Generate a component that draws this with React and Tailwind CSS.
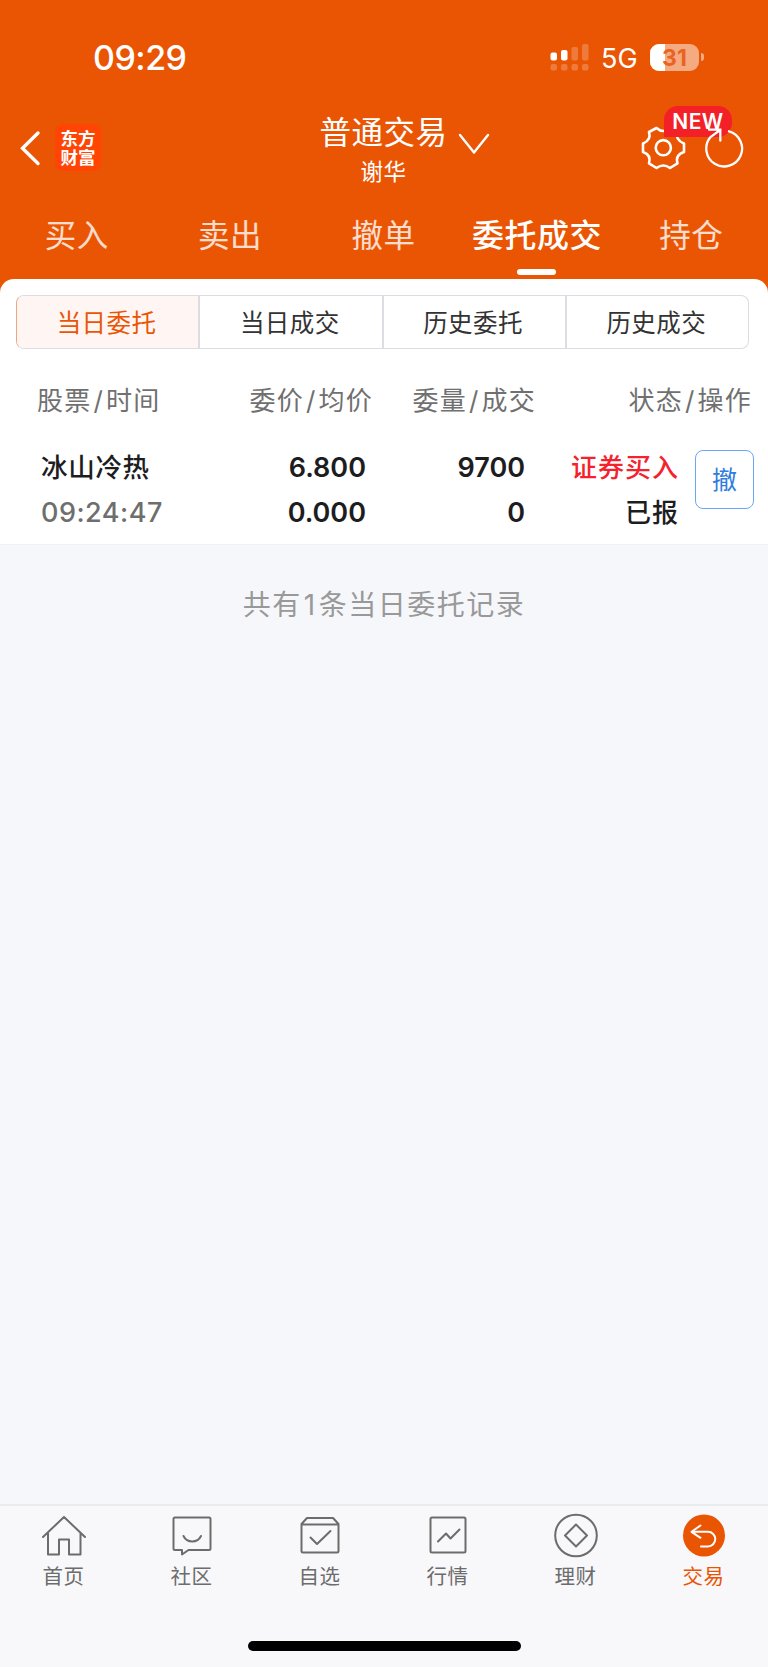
const tabs = ["买入", "卖出", "撤单", "委托成交", "持仓"];

const segments = ["当日委托", "当日成交", "历史委托", "历史成交"];

const orders = [
  {
    name: "冰山冷热",
    time: "09:24:47",
    price: "6.800",
    avgPrice: "0.000",
    amount: "9700",
    filled: "0",
    side: "证券买入",
    status: "已报",
  },
];

const HomeIcon = () => (
  <svg className="w-12 h-12" viewBox="0 0 48 48" fill="none" stroke="currentColor" strokeWidth="2" strokeLinejoin="round" strokeLinecap="round">
    <path d="M3 25 24 5l21 20M8 21.500V42.500H19V27.500h10v15h11.500v-21" />
  </svg>
);

const CommunityIcon = () => (
  <svg className="w-12 h-12" viewBox="0 0 48 48" fill="none" stroke="currentColor" strokeWidth="2" strokeLinejoin="round" strokeLinecap="round">
    <path d="M7 5.500h34a1.500 1.500 0 0 1 1.500 1.500v29.500a1.500 1.500 0 0 1-1.500 1.500H20.500L14 42.500V38H7a1.500 1.500 0 0 1-1.500-1.500V7A1.500 1.500 0 0 1 7 5.500Z" />
    <path d="M15.500 24c3.500 7.300 14 7.300 17.500 0" />
  </svg>
);

const WatchlistIcon = () => (
  <svg className="w-12 h-12" viewBox="0 0 48 48" fill="none" stroke="currentColor" strokeWidth="2" strokeLinejoin="round" strokeLinecap="round">
    <path d="M5.500 12 11 6h26l5.500 6V39a1.500 1.500 0 0 1-1.500 1.500H7A1.500 1.500 0 0 1 5.500 39V12ZM5.500 12.500h37" />
    <path d="m14.500 25.500 6.500 6.500 13.500-13" />
  </svg>
);

const MarketIcon = () => (
  <svg className="w-12 h-12" viewBox="0 0 48 48" fill="none" stroke="currentColor" strokeWidth="2" strokeLinejoin="round" strokeLinecap="round">
    <rect x="6.500" y="5.500" width="35" height="35" rx="1.500" />
    <path d="m14 29.500 8-8 4.500 5L35.500 17.500" />
  </svg>
);

const WealthIcon = () => (
  <svg className="w-12 h-12" viewBox="0 0 48 48" fill="none" stroke="currentColor" strokeWidth="2" strokeLinejoin="round">
    <circle cx="24" cy="23.500" r="20.800" />
    <path d="M24 12.500 35 23.500 24 34.500 13 23.500Z" />
  </svg>
);

const TradeIcon = () => (
  <svg className="w-12 h-12" viewBox="0 0 48 48" fill="none">
    <circle cx="24" cy="23.500" r="21" fill="#ea5504" />
    <path d="M20.500 13.500 11.500 19.800l9 6M12 19.800h16a7.300 7.300 0 0 1 0 14.600h-7" stroke="#fff" strokeWidth="2" strokeLinejoin="round" strokeLinecap="round" />
  </svg>
);

const navItems = [
  { label: "首页", icon: HomeIcon },
  { label: "社区", icon: CommunityIcon },
  { label: "自选", icon: WatchlistIcon },
  { label: "行情", icon: MarketIcon },
  { label: "理财", icon: WealthIcon },
  { label: "交易", icon: TradeIcon, active: true },
];

const StatusBar = () => (
  <div className="h-[110px] pt-[37px] pl-[93px] pr-[64px] flex items-start justify-between">
    <span className="text-[34px] leading-[41px] font-medium tracking-[-0.5px]">09:29</span>
    <div className="h-10 flex items-center">
      {/* Dual SIM signal */}
      <svg className="w-[39px] h-7" viewBox="0 0 39 28" fill="#fff">
        <rect x="0.500" y="9.500" width="6.500" height="8" rx="2" />
        <rect x="11" y="7" width="6.500" height="10.500" rx="2" />
        <g fillOpacity="0.220">
          <rect x="21.500" y="4" width="6.500" height="13.500" rx="2" />
          <rect x="32" y="1" width="6.500" height="16.500" rx="2" />
          <rect x="0.500" y="21" width="6.500" height="6.500" rx="2" />
          <rect x="11" y="21" width="6.500" height="6.500" rx="2" />
          <rect x="21.500" y="21" width="6.500" height="6.500" rx="2" />
          <rect x="32" y="21" width="6.500" height="6.500" rx="2" />
        </g>
      </svg>
      <span className="ml-3 pt-[3px] w-[37px] text-[27px] leading-9 whitespace-nowrap">5G</span>
      <div className="ml-3 relative w-[49px] h-[27px] rounded-[9px] overflow-hidden bg-white/50">
        <div className="w-[15px] h-full bg-white" />
        <span className="absolute inset-0 text-center text-[23px] leading-[28px] font-bold text-[#e86420]">31</span>
      </div>
      <div className="ml-[2px] w-[3px] h-2 rounded-r-full bg-white/50" />
    </div>
  </div>
);

const NavBar = () => (
  <div className="relative h-[82px] flex justify-center">
    <div className="absolute left-5 top-3 flex items-center gap-[14px]">
      <svg className="w-[21px] h-[50px]" viewBox="0 0 21 50" fill="none" stroke="#fff" strokeWidth="3.400" strokeLinecap="round">
        <path d="M18 11 2.500 26.300 18 41.500" />
      </svg>
      <div className="w-[46px] h-[47px] pt-px rounded-lg bg-[#ff4403] flex flex-col items-center justify-center text-[17.500px] leading-[19px] font-bold">
        <span>东方</span>
        <span>财富</span>
      </div>
    </div>

    <div className="flex flex-col items-center pr-px">
      <h1 className="pt-px text-[31.500px] leading-[44px] tracking-[0.500px]">普通交易</h1>
      <p className="text-[22.500px] leading-[34px] tracking-[0.500px]">谢华</p>
    </div>
    <svg className="absolute left-[458px] top-[22px] w-8 h-6" viewBox="0 0 32 24" fill="none" stroke="#fff" strokeWidth="2.400" strokeLinecap="round" strokeLinejoin="round">
      <path d="m2 3 14 17.500L30 3" />
    </svg>

    <svg className="absolute left-[641px] top-[15px] w-[46px] h-[46px]" viewBox="0 0 46 46" fill="none" stroke="#fff" strokeWidth="2.600" strokeLinejoin="round">
      <circle cx="22.300" cy="22.700" r="7.600" />
      <path d="M15.500 3 Q22.300 9 29 3 L36.500 7 Q34 15 43 18.500 V27 Q34 30 36.500 38.300 L29 43 Q22.300 38 15.500 43 L8 38.300 Q10.500 30 2 27 V18.500 Q10.500 15 8 7 Z" />
    </svg>
    <span className="absolute left-[664px] -top-[4px] w-[68px] h-[31px] rounded-[14px] rounded-bl-none bg-[#f32027] text-center text-[21px] leading-[31px] font-semibold tracking-[0.500px]">
      NEW
    </span>
    <svg className="absolute left-[703px] top-4 w-[42px] h-[42px]" viewBox="0 0 42 42" fill="none" stroke="#fff" strokeWidth="2.300" strokeLinecap="round">
      <path d="M26 5.300A17.900 17.900 0 1 1 7.500 11L16.500 4.500M6 3.700h11.300v11" />
    </svg>
  </div>
);

const Tabs = () => (
  <nav className="h-[87px] flex">
    {tabs.map((tab) => (
      <button
        key={tab}
        className={`flex-1 basis-0 pt-[21px] flex flex-col items-center whitespace-nowrap leading-[46px] tracking-[0.500px] ${
          tab === "委托成交" ? "pr-px text-[32px] font-medium text-white" : "text-[31.500px] text-white/80"
        }`}
      >
        {tab}
        {tab === "委托成交" && <span className="mt-[10px] w-[39px] h-[6px] rounded-full bg-white" />}
      </button>
    ))}
  </nav>
);

const OrderTable = () => (
  <table className="w-full table-fixed border-collapse text-right text-[#1d1d1f]">
    <colgroup>
      <col className="w-[210px]" />
      <col className="w-[163px]" />
      <col className="w-[163px]" />
      <col className="w-[232px]" />
    </colgroup>
    <thead>
      <tr className="h-[96px] text-[26px] tracking-[1.200px] text-[#707070] whitespace-nowrap">
        <th className="pt-[6px] pl-[37px] text-left font-normal">股票<span className="mx-[2px]">/</span>时间</th>
        <th className="pt-[6px] font-normal">委价<span className="mx-[2px]">/</span>均价</th>
        <th className="pt-[6px] font-normal">委量<span className="mx-[2px]">/</span>成交</th>
        <th className="pt-[6px] pr-[16px] font-normal">状态<span className="mx-[2px]">/</span>操作</th>
      </tr>
    </thead>
    <tbody>
      {orders.map((order) => (
        <tr key={order.time} className="h-[99px] align-top text-[27px] leading-[45px] font-semibold whitespace-nowrap">
          <td className="pl-[41px] text-left">
            <div className="text-[26.500px] tracking-[0.700px] font-medium">{order.name}</div>
            <div className="font-medium text-[#6e6e6e] tracking-[0.500px]">{order.time}</div>
          </td>
          <td className="pr-[7px]">
            <div>{order.price}</div>
            <div>{order.avgPrice}</div>
          </td>
          <td className="pr-[11px]">
            <div>{order.amount}</div>
            <div>{order.filled}</div>
          </td>
          <td className="pr-[14px]">
            <div className="flex justify-end gap-4">
              <div className="text-[26px] tracking-[1px] font-medium">
                <div className="text-[#f5222d]">{order.side}</div>
                <div>{order.status}</div>
              </div>
              <button className="mt-[5px] w-[59px] h-[59px] rounded-lg border-[1.500px] border-[#6ba6f5] text-[25px] leading-[56px] font-normal text-[#2f7de1]">
                撤
              </button>
            </div>
          </td>
        </tr>
      ))}
    </tbody>
  </table>
);

const App = () => {
  return (
    <div className="w-[768px] h-[1667px] flex flex-col overflow-hidden bg-[#f6f7fa] font-[Inter,'Noto_Sans_CJK_SC',sans-serif]">
      <header className="bg-[#ea5504] text-white">
        <StatusBar />
        <NavBar />
        <Tabs />
      </header>

      <div className="bg-[#ea5504]">
        <section className="bg-white rounded-t-[14px] pt-4 h-[265px]">
          <div className="ml-4 w-[733px] h-[54px] flex rounded-lg border-[1.500px] border-[#dcdce2] border-l-[#eda582] overflow-hidden divide-x-2 divide-[#dcdce2]">
            {segments.map((item, index) => (
              <button
                key={item}
                className={`flex-1 pt-[3px] pr-[2px] text-[24.500px] tracking-[0.500px] ${
                  index === 0 ? "bg-[#fff5f2] text-[#ea5504]" : "text-[#333]"
                }`}
              >
                {item}
              </button>
            ))}
          </div>
          <OrderTable />
        </section>
      </div>

      <main className="flex-1 border-t border-[#f0f1f3]">
        <p className="pt-[38px] text-center text-[28px] leading-[44px] tracking-[1.500px] text-[#999]">
          共有<span className="mx-[2px]">1</span>条当日委托记录
        </p>
      </main>

      <footer className="h-[163px] border-t-2 border-[#ebecee] bg-[#f8f8fb]">
        <div className="flex">
          {navItems.map((item) => (
            <button
              key={item.label}
              className={`flex-1 pt-[6px] flex flex-col items-center ${
                item.active ? "text-[#ea5504]" : "text-[#6c6c6c]"
              }`}
            >
              <item.icon />
              <span className="mt-[3px] pr-px text-[20.500px] leading-7 tracking-[0.500px]">{item.label}</span>
            </button>
          ))}
        </div>
        <div className="mx-auto mt-[50px] w-[273px] h-[10px] rounded-full bg-black" />
      </footer>
    </div>
  );
};

export default App;
